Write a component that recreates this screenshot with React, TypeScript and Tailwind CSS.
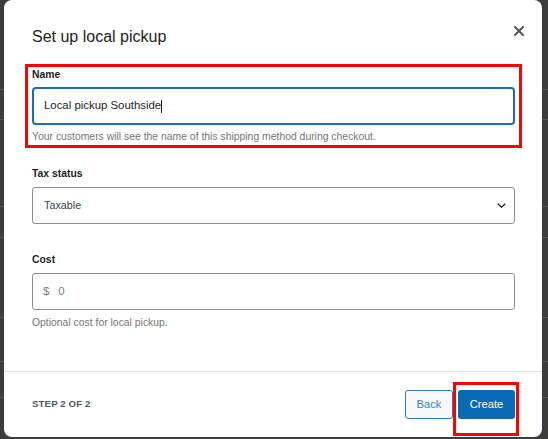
import React from "react";

export default function App() {
  return (
    <div className="relative w-[548px] h-[439px] overflow-hidden bg-[#3c3c3c] font-['Liberation_Sans',Arial,sans-serif]">
      {/* background page rows (dimmed behind the modal) */}
      <div className="flex flex-col">
        <div className="h-[90px] border-b border-[#555555]" />
        <div className="h-[30px] border-b border-[#555555]" />
        <div className="h-[87px] border-b border-[#555555]" />
        <div className="h-[31px] border-b border-[#555555]" />
        <div className="h-[80px] border-b border-[#555555]" />
        <div className="h-[44px] border-b border-[#555555]" />
        <div className="h-[36px] border-b border-[#555555]" />
      </div>

      {/* modal overlay */}
      <div className="absolute left-[4px] top-0 w-[538px] h-[437px] bg-white rounded-[8px] flex flex-col">
        <div className="flex-1 flex flex-col">
          <div className="flex items-start justify-between pl-[28px] pr-[18px] pt-[26px]">
            <h1 className="mt-[1px] text-[16px] leading-[20px] text-[#1e1e1e] font-normal">
              Set up local pickup
            </h1>
            <svg width="10" height="10" viewBox="0 0 10 10" className="mt-[0px]">
              <path d="M1 1 L9 9 M9 1 L1 9" stroke="#555555" strokeWidth="2" strokeLinecap="square" />
            </svg>
          </div>

          <div className="pl-[28px] pr-[27px] flex flex-col">
            {/* Name group with red annotation */}
            <div className="mt-[17px] -mx-[7px] border-[3px] border-[#ff0000] px-[4px] pt-[1px] pb-[1px] flex flex-col">
              <div className="text-[10.4px] leading-[14px] font-bold text-[#1e1e1e]">Name</div>
              <div className="mt-[5px] h-[38px] border-2 border-[#1d6db4] rounded-[4px] pl-[10px] flex items-center text-[11.4px] text-[#1e1e1e]">
                <span>Local pickup Southside</span>
                <span className="w-px h-[13px] bg-[#1e1e1e]" />
              </div>
              <div className="mt-[5px] text-[10.4px] leading-[14px] text-[#757575]">
                Your customers will see the name of this shipping method during checkout.
              </div>
            </div>

            <div className="mt-[19px] text-[10.4px] leading-[14px] font-bold text-[#1e1e1e]">Tax status</div>
            <div className="mt-[6px] h-[37px] border border-[#8c8f94] rounded-[3px] pl-[11px] pr-[8px] flex items-center justify-between text-[10.8px] text-[#3c434a]">
              <span>Taxable</span>
              <svg width="9" height="5" viewBox="0 0 9 5">
                <path d="M0.7 0.7 L4.5 4.2 L8.3 0.7" fill="none" stroke="#1e1e1e" strokeWidth="1.3" />
              </svg>
            </div>

            <div className="mt-[29px] text-[10.4px] leading-[14px] font-bold text-[#1e1e1e]">Cost</div>
            <div className="mt-[6px] h-[37px] border border-[#8c8f94] rounded-[3px] pl-[10px] flex items-center text-[11.4px] text-[#787c82]">
              <span>$</span>
              <span className="ml-[9px]">0</span>
            </div>
            <div className="mt-[6px] text-[10.4px] leading-[14px] text-[#757575]">
              Optional cost for local pickup.
            </div>
          </div>
        </div>

        <div className="h-[66px] border-t border-[#e0e0e0] pl-[28px] pr-[27px] flex items-center justify-between">
          <div className="text-[9.7px] font-bold tracking-[0.1px] text-[#50575e] uppercase">Step 2 of 2</div>
          <div className="flex items-center gap-[5px]">
            <button className="w-[48px] h-[29px] border border-[#3179bd] rounded-[3px] bg-[#f6f8fa] text-[11.2px] text-[#3a83c4]">
              Back
            </button>
            <div className="relative">
              <button className="w-[57px] h-[29px] rounded-[3px] bg-[#0a6ab4] text-[11.2px] text-white">
                Create
              </button>
              <span className="pointer-events-none absolute -left-[5px] -right-[4px] -top-[8px] -bottom-[17px] border-[3px] border-[#ff0000]" />
            </div>
          </div>
        </div>
      </div>
    </div>
  );
}
